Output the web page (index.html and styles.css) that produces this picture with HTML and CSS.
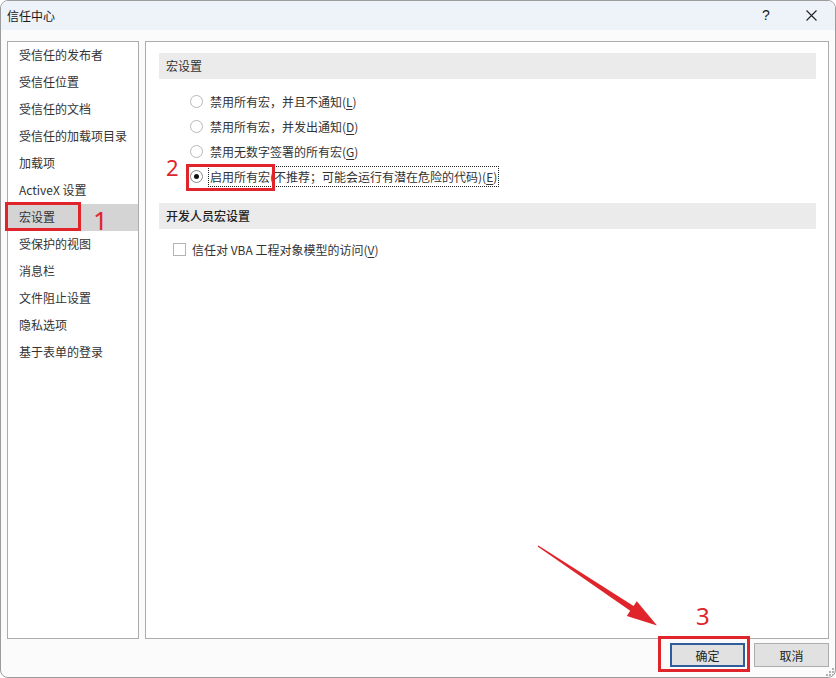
FILE: index.html
```html
<!DOCTYPE html>
<html>
<head>
  <meta charset="utf-8">
  <title>信任中心</title>
  <link rel="stylesheet" href="styles.css">
</head>
<body>
  <div class="window">
    <div class="titlebar">
      <span class="title">信任中心</span>
      <span class="help">?</span>
      <span class="close">
        <svg width="11" height="11" viewBox="0 0 11 11"><path d="M0.5 0.5L10.5 10.5M10.5 0.5L0.5 10.5" stroke="#222" stroke-width="1.1"/></svg>
      </span>
    </div>

    <div class="main">
      <ul class="nav">
        <li>受信任的发布者</li>
        <li>受信任位置</li>
        <li>受信任的文档</li>
        <li>受信任的加载项目录</li>
        <li>加载项</li>
        <li>ActiveX 设置</li>
        <li class="active">宏设置</li>
        <li>受保护的视图</li>
        <li>消息栏</li>
        <li>文件阻止设置</li>
        <li>隐私选项</li>
        <li>基于表单的登录</li>
      </ul>

      <div class="content">
        <div class="section-head">宏设置</div>
        <div class="options">
          <label class="radio-row"><span class="radio"></span><span>禁用所有宏，并且不通知(<u>L</u>)</span></label>
          <label class="radio-row"><span class="radio"></span><span>禁用所有宏，并发出通知(<u>D</u>)</span></label>
          <label class="radio-row"><span class="radio"></span><span>禁用无数字签署的所有宏(<u>G</u>)</span></label>
          <label class="radio-row"><span class="radio checked"></span><span class="focus">启用所有宏(不推荐；可能会运行有潜在危险的代码)(<u>E</u>)</span></label>
        </div>

        <div class="section-head dev">开发人员宏设置</div>
        <label class="check-row"><span class="checkbox"></span><span>信任对 VBA 工程对象模型的访问(<u>V</u>)</span></label>
      </div>
    </div>

    <div class="footer">
      <button class="btn primary">确定</button>
      <button class="btn">取消</button>
      <svg class="grip" width="9" height="9" viewBox="0 0 9 9">
        <g fill="#b0b0b0">
          <rect x="7" y="1" width="2" height="2"/>
          <rect x="4" y="4" width="2" height="2"/><rect x="7" y="4" width="2" height="2"/>
          <rect x="1" y="7" width="2" height="2"/><rect x="4" y="7" width="2" height="2"/><rect x="7" y="7" width="2" height="2"/>
        </g>
      </svg>
    </div>
  </div>

  <!-- 标注层：红框、步骤编号和箭头 -->
  <div class="marks">
    <div class="mark-box box1"></div>
    <div class="mark-num num1">1</div>
    <div class="mark-box box2"></div>
    <div class="mark-num num2">2</div>
    <div class="mark-box box3"></div>
    <div class="mark-num num3">3</div>
    <svg class="arrow" width="836" height="678" viewBox="0 0 836 678">
      <polygon fill="#e0242c" points="537.6,546.6 630.2,610.8 626.8,616 657,625.5 636.8,601.2 633.6,606 538.4,545.4"/>
    </svg>
  </div>
</body>
</html>
```

FILE: styles.css
```css
* {
  box-sizing: border-box;
}

body {
  margin: 0;
  padding: 0;
  font-family: "Noto Sans CJK SC", "Noto Sans", sans-serif;
  font-size: 12px;
  color: #333;
  background-color: #ffffff;
  position: relative;
}

.window {
  width: 836px;
  height: 678px;
  border: 1px solid #9c9c9c;
  border-radius: 8px;
  background-color: #fbfbfb;
  display: flex;
  flex-direction: column;
  overflow: hidden;
}

.titlebar {
  height: 29px;
  flex: none;
  background-color: #eef2f9;
  display: flex;
  align-items: center;
  padding-left: 6px;
  color: #1a1a1a;
}

.titlebar .title {
  flex: 1;
  font-size: 12px;
}

.titlebar .help {
  font-family: "Liberation Sans", sans-serif;
  font-size: 14px;
  width: 46px;
  text-align: center;
  margin-top: -2px;
}

.titlebar .close {
  width: 44px;
  display: flex;
  justify-content: center;
  margin-right: 2px;
}

.main {
  flex: 1;
  display: flex;
  gap: 6px;
  padding: 11px 6px 0 6px;
}

.nav {
  list-style: none;
  margin: 0;
  padding: 0;
  width: 132px;
  height: 598px;
  border: 1px solid #acacac;
  background-color: #ffffff;
}

.nav li {
  height: 27px;
  line-height: 25px;
  padding-left: 11px;
  white-space: nowrap;
}

.nav li.active {
  background-color: #d4d4d4;
}

.content {
  flex: 1;
  height: 598px;
  border: 1px solid #acacac;
  background-color: #ffffff;
  padding-top: 11px;
}

.section-head {
  margin: 0 12px 0 13px;
  height: 26px;
  line-height: 25px;
  padding-left: 7px;
  background-color: #ebebeb;
}

.section-head.dev {
  margin-top: 14px;
  font-weight: 500;
  color: #222;
}

.options {
  margin-top: 10px;
  padding-left: 44px;
}

.radio-row,
.check-row {
  display: flex;
  align-items: center;
  height: 25px;
}

.radio {
  width: 13px;
  height: 13px;
  border: 1px solid #b8b8b8;
  border-radius: 50%;
  margin-right: 7px;
  display: flex;
  align-items: center;
  justify-content: center;
  background-color: #fff;
}

.radio.checked {
  border-color: #8a8a8a;
}

.radio.checked::after {
  content: "";
  width: 5px;
  height: 5px;
  border-radius: 50%;
  background-color: #111;
}

.focus {
  border: 1px dotted #222;
  padding: 0 1px;
  line-height: 19px;
  margin-left: -2px;
}

.check-row {
  margin-top: 8px;
  padding-left: 27px;
}

.checkbox {
  width: 13px;
  height: 13px;
  border: 1px solid #b4b4b4;
  background-color: #fff;
  margin-right: 6px;
}

u {
  text-decoration-thickness: 1px;
  text-underline-offset: 2px;
}

.footer {
  height: 38px;
  flex: none;
  display: flex;
  justify-content: flex-end;
  align-items: flex-start;
  gap: 9px;
  padding: 4px 6px 0 0;
  position: relative;
}

.btn {
  width: 75px;
  height: 24px;
  font-family: inherit;
  font-size: 12px;
  color: #222;
  background-color: #e1e1e1;
  border: 1px solid #adadad;
  padding: 0;
}

.btn.primary {
  border: 2px solid #2f5d9c;
}

.grip {
  position: absolute;
  right: 1px;
  bottom: 1px;
}

/* 标注 */
.marks {
  position: absolute;
  top: 0;
  left: 0;
  width: 836px;
  height: 678px;
  pointer-events: none;
}

.mark-box {
  position: absolute;
  border: 3px solid #e0242c;
}

.box1 {
  left: 5px;
  top: 202px;
  width: 76px;
  height: 29px;
}

.box2 {
  left: 186px;
  top: 164px;
  width: 89px;
  height: 27px;
}

.box3 {
  left: 658px;
  top: 636px;
  width: 92px;
  height: 36px;
}

.mark-num {
  position: absolute;
  font-family: "Noto Sans", sans-serif;
  color: #e0242c;
  line-height: 1;
}

.num1 {
  left: 93px;
  top: 207px;
  font-size: 26px;
}

.num2 {
  left: 166px;
  top: 156px;
  font-size: 22px;
}

.num3 {
  left: 696px;
  top: 604px;
  font-size: 24px;
}

.arrow {
  position: absolute;
  top: 0;
  left: 0;
}
```
